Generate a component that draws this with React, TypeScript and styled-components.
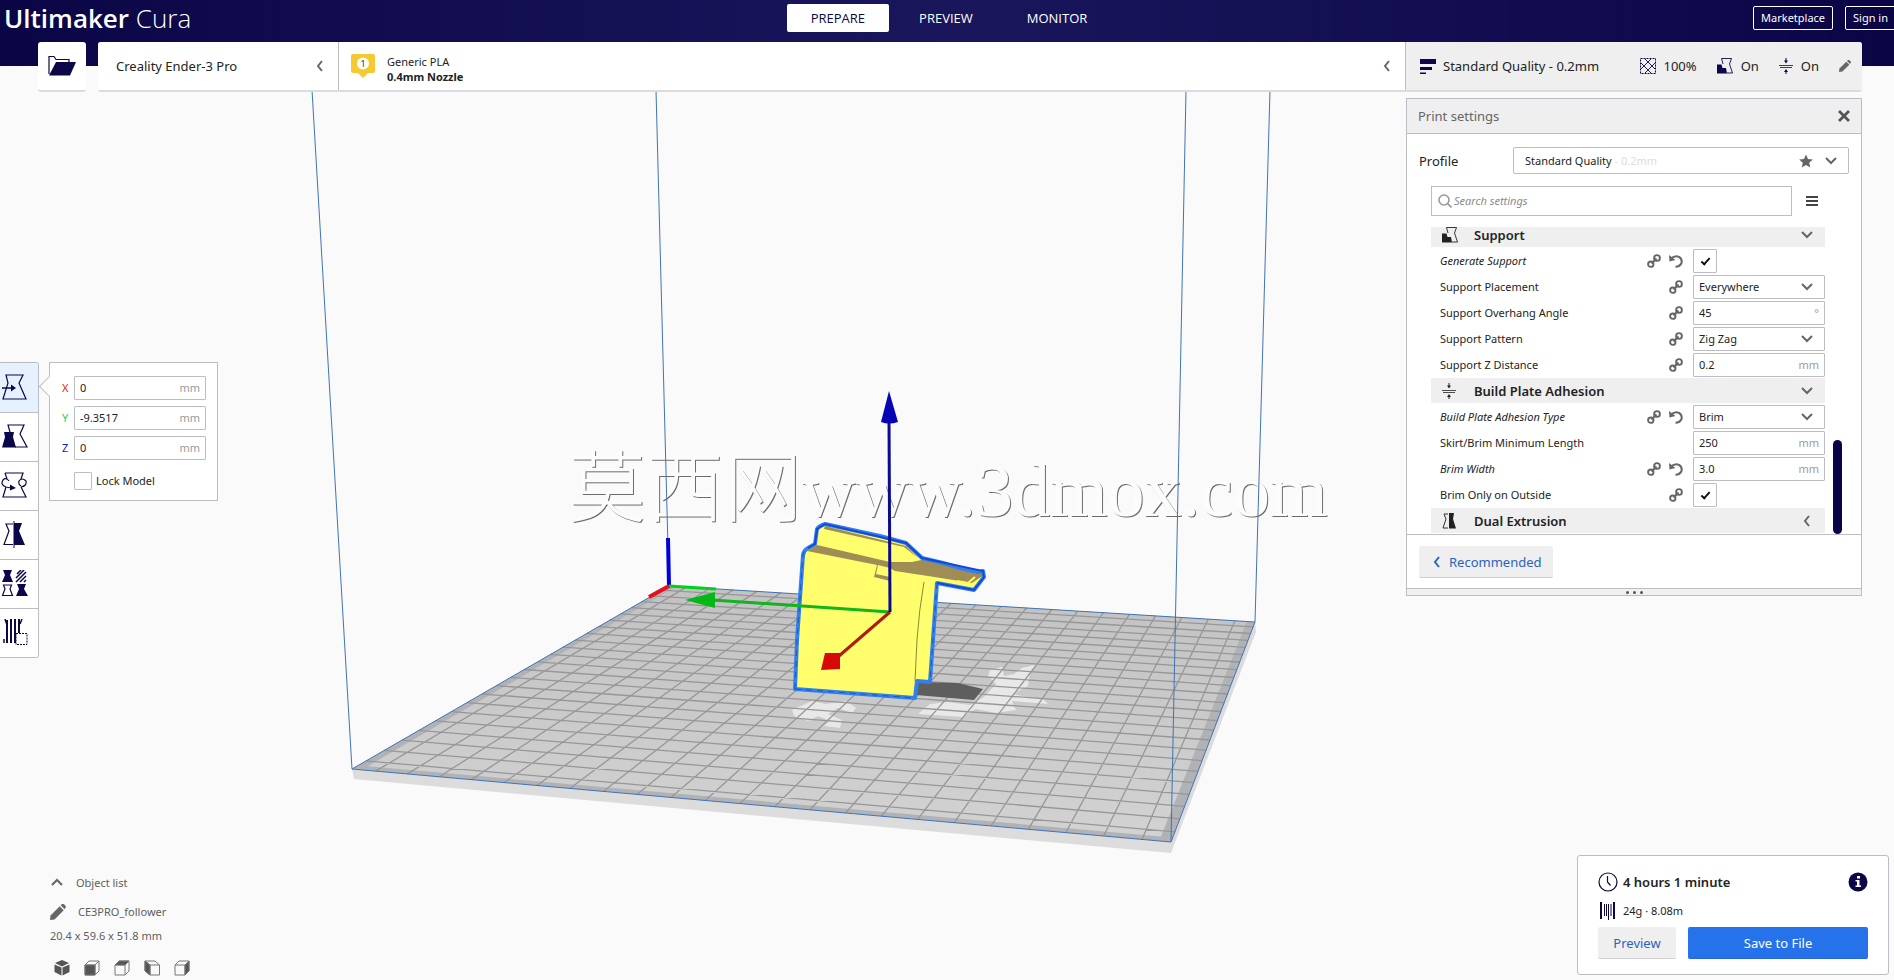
import React from "react";
import styled, { createGlobalStyle } from "styled-components";

const navy = "#0b0748";
const ink = "#232323";
const grey = "#666";
const line = "#bcbcc4";
const blue = "#2a63bd";

const GlobalStyle = createGlobalStyle`
  *, *::before, *::after { box-sizing: border-box; }
  body { margin: 0; background: #fafafa; color: ${ink}; font: 11px/16px "Noto Sans", "Noto Sans CJK SC", sans-serif; }
  button, input, select { font: inherit; color: inherit; margin: 0; }
  button { cursor: pointer; }
  svg { display: block; flex: none; }
`;

const Page = styled.div`
  position: relative;
  display: flex;
  flex-direction: column;
  min-height: 100vh;
  overflow: hidden;
`;

/* ---------- 3D scene ---------- */

const SceneSvg = styled.svg`
  position: absolute;
  inset: 0;
  width: 100%;
  height: 100%;
`;

const Watermark = styled.text`
  font-family: "Liberation Serif", "Noto Sans CJK SC", serif;
  font-size: 74px;
  font-weight: 300;
  fill: #fcfcfc;
  filter: drop-shadow(1px 1px 0 #6c6c6c);
`;

const WatermarkHan = styled.tspan`
  font-family: "Noto Sans CJK SC", sans-serif;
  font-size: 78px;
`;

type Pt = [number, number];
const bed: Pt[] = [
  [352, 769],
  [1171, 842],
  [1255, 622],
  [669, 586],
];

/* Maps a point of the unit square onto the build plate as the camera sees it. */
function project(u: number, v: number): Pt {
  const [[x0, y0], [x1, y1], [x2, y2], [x3, y3]] = bed;
  const dx1 = x1 - x2;
  const dx2 = x3 - x2;
  const sx = x0 - x1 + x2 - x3;
  const dy1 = y1 - y2;
  const dy2 = y3 - y2;
  const sy = y0 - y1 + y2 - y3;
  const det = dx1 * dy2 - dx2 * dy1;
  const g = (sx * dy2 - dx2 * sy) / det;
  const h = (dx1 * sy - sx * dy1) / det;
  const w = g * u + h * v + 1;
  return [
    ((x1 - x0 + g * x1) * u + (x3 - x0 + h * x3) * v + x0) / w,
    ((y1 - y0 + g * y1) * u + (y3 - y0 + h * y3) * v + y0) / w,
  ];
}

const seg = (a: Pt, b: Pt) =>
  `M${a[0].toFixed(1)} ${a[1].toFixed(1)}L${b[0].toFixed(1)} ${b[1].toFixed(1)}`;
const poly = (pts: Pt[]) => pts.map((p) => p.map((n) => n.toFixed(1)).join(",")).join(" ");

const gridSteps = Array.from({ length: 23 }, (_, i) => (0.75 + i) / 23.5);
const gridPath = gridSteps
  .map((t) => seg(project(t, 0), project(t, 1)) + seg(project(0, t), project(1, t)))
  .join("");
const plate = poly([
  project(0.013, 0.014),
  project(0.987, 0.014),
  project(0.987, 1),
  project(0.013, 1),
]);

const modelOutline =
  "M795 689L797 640L803 555Q804 550 808 548L815 544L817 529Q819 526 825 524L880 536L906 543L922 558L943 563L960 568L978 572L983 571L984 577L974 590L937 583L934 625L930 682L917 681L915 698Z";

function Scene() {
  return (
    <SceneSvg viewBox="0 0 1894 980" preserveAspectRatio="xMidYMid slice" aria-hidden="true">
      <defs>
        <linearGradient id="bedShade" x1="0" y1="0" x2="0" y2="1">
          <stop offset="0" stopColor="#c2c2c2" />
          <stop offset="1" stopColor="#d2d2d2" />
        </linearGradient>
      </defs>
      <Watermark x="568" y="516">
        <WatermarkHan>莫西网</WatermarkHan>www.3dmox.com
      </Watermark>
      <path d="M352 769L1171 842L1255 622L1256 632L1171 853L354 779Z" fill="#dcdcdc" />
      <polygon points={poly(bed)} fill="#b0b2b6" />
      <polygon points={plate} fill="url(#bedShade)" />
      <g fill="#e8e8e8">
        <path d="M792 710L812 701L826 704L846 701L856 708L852 713L838 708L828 714L842 720L840 728L824 726L830 721L818 716L808 721L794 716Z" />
        <path d="M918 714L930 704L948 702L970 705L984 697L996 684L988 676L990 670L1002 667L1004 676L1014 674L1022 668L1038 664L1030 672L1028 686L1012 694L1044 700L1048 704L1012 701L1016 710L996 713L976 709L962 717Z" />
      </g>
      <path d={gridPath} stroke="#979797" strokeWidth="1.300" fill="none" />
      <path d="M917 682L958 683L983 689L974 700L916 695Z" fill="#5e5e5e" />
      <path
        d="M312 90L352 769L1171 842L1186 90M1270 90L1255 622L1171 842M1255 622L669 586L656 90M669 586L352 769"
        fill="none"
        stroke="#4073b5"
      />
      <path d="M668 538L669 586" stroke="#0000dd" strokeWidth="4" />
      <path d="M669 586L716 589" stroke="#00d21c" strokeWidth="3" />
      <path d="M669 586L649 597" stroke="#e60f1e" strokeWidth="4" />
      <path d={modelOutline} fill="#ffff6e" />
      <path
        d="M807 551L817 545L890 562L912 562L926 559L950 564L983 572L984 575L972 583L966 582L928 576L895 571L890 568L878 565L876 574L890 577L890 581L874 577L877 565Z"
        fill="#a08d55"
      />
      <path d="M825 526L906 546L918 558L904 547L824 529Z" fill="#a08d55" />
      <path d="M924 582Q919 610 917 640L915 681" fill="none" stroke="#8b873a" />
      <path d="M957 581L968 583L975 577" fill="none" stroke="#ffff50" strokeWidth="2" />
      <path d={modelOutline} fill="none" stroke="#3080ee" strokeWidth="4" strokeLinejoin="round" />
      <path
        d="M795 689L797 640L803 555Q804 550 808 548L815 544M795 689L915 698M937 583L934 625L930 682"
        fill="none"
        stroke="#2257b4"
        strokeDasharray="6 5"
      />
      <path d="M808 548L815 544L817 529L825 524L906 543L922 558L983 571L984 577L974 590L937 583" fill="none" stroke="#1648d8" strokeWidth="2" />
      <path d="M890 612L712 600" stroke="#12b51c" strokeWidth="3" />
      <path d="M685 600L715 592L715 608Z" fill="#05b915" />
      <path d="M890 612L832 662" stroke="#ad1c0c" strokeWidth="3" />
      <path d="M825 653L840 653L840 669L821 670Z" fill="#d60808" />
      <path d="M889 420L890 612" stroke="#0c0c8c" strokeWidth="3" />
      <path d="M889 391L898 422Q889 425 881 422Z" fill="#0505b4" />
    </SceneSvg>
  );
}

/* ---------- Icons ---------- */

type ChevronDir = "down" | "left" | "up";
const chevronPaths: Record<ChevronDir, string> = {
  down: "M2 4L7 9L12 4",
  left: "M9 2L5 7L9 12",
  up: "M2 9L7 4L12 9",
};
const Chevron = ({ dir, color = grey }: { dir: ChevronDir; color?: string }) => (
  <svg width="14" height="14" viewBox="0 0 14 14" fill="none" stroke={color} strokeWidth="2">
    <path d={chevronPaths[dir]} />
  </svg>
);

const LinkIcon = () => (
  <svg width="14" height="14" viewBox="0 0 14 14" fill="none" stroke={grey} strokeWidth="1.900">
    <circle cx="3.800" cy="10.200" r="2.700" />
    <circle cx="10" cy="4" r="2.900" />
    <path d="M4.500 9.500L9.500 4.500" />
  </svg>
);

const RevertIcon = () => (
  <svg width="14" height="14" viewBox="0 0 14 14" fill="none" stroke={grey} strokeWidth="2">
    <path d="M2 4.500Q6 1 10 2.800Q13.500 5 12.500 9Q11 12.600 6.500 12.800" />
    <path d="M0 1L0.500 7.500L6.500 6Z" fill={grey} stroke="none" />
  </svg>
);

const SupportIcon = ({ color = navy }: { color?: string }) => (
  <svg width="16" height="16" viewBox="0 0 16 16">
    <path d="M4.500 0.500H14.500L12.500 6L15.500 15H10" fill="none" stroke={color} strokeWidth="0.900" />
    <path d="M4.500 0.500L6 6" fill="none" stroke={color} strokeWidth="0.900" />
    <path d="M0 6.500H4.500L5.500 10H9L10 15.500H0Z" fill={color} />
  </svg>
);

const AdhesionIcon = ({ color = navy }: { color?: string }) => (
  <svg width="14" height="16" viewBox="0 0 14 16" stroke={color} fill={color}>
    <path d="M0 7.500H14M1 9.500H13" fill="none" strokeWidth="0.800" />
    <path d="M7 0V3M7 13V16" fill="none" />
    <path d="M5 2.500H9L7 5.500ZM5 14H9L7 11Z" stroke="none" />
  </svg>
);

const DualIcon = () => (
  <svg width="14" height="16" viewBox="0 0 14 16">
    <path d="M6 1H2L4 6L1 15H6" fill="none" stroke="#333" />
    <path d="M7 0H12L11 6L14 15.500H7Z" fill="#222" />
  </svg>
);

const InfillIcon = () => (
  <svg width="16" height="16" viewBox="0 0 16 16" fill="none" stroke={navy}>
    <rect x="0.500" y="0.500" width="15" height="15" strokeDasharray="2 1" />
    <path d="M5 1L15 11M11 1L1 11M1 5L11 15M15 5L5 15" strokeWidth="0.900" />
  </svg>
);

const PencilIcon = ({ size = 12 }: { size?: number }) => (
  <svg width={size} height={size} viewBox="0 0 14 14" fill={grey}>
    <path d="M0 14L0.500 10L8.500 2L12 5.500L4 13.500Z" />
    <path d="M9.300 1.200L10.500 0Q11.500 -0.500 12.500 0.500L13.500 1.500Q14.300 2.500 13.500 3.500L12.800 4.700Z" />
  </svg>
);

const FolderIcon = () => (
  <svg width="28" height="22" viewBox="0 0 28 22">
    <path d="M1 19V1.500H6L8 4.500H21V8" fill="none" stroke={navy} strokeWidth="1.200" />
    <path d="M8 7H28L22 20.500H1Z" fill={navy} />
  </svg>
);

const QualityIcon = () => (
  <svg width="16" height="16" viewBox="0 0 16 16" fill={navy}>
    <path d="M0 1H16V6H0ZM0 9H12V12H0ZM0 14.500H6V16H0Z" />
  </svg>
);

const glassOutline = "M5 1H22L18 9L25 25H2L7 9Z";

const toolGlyphs: Record<string, React.ReactNode> = {
  Move: (
    <>
      <path d={glassOutline} />
      <path d="M1 14H12" strokeWidth="1.600" />
      <path d="M10 10.500L15 14L10 17.500Z" fill={navy} stroke="none" />
    </>
  ),
  Scale: (
    <>
      <path d="M8 11L9 9L7 2H23L19 11L26 24H14" />
      <path d="M3 9H13L12 14L15 24.500H1L4 14Z" fill={navy} stroke="none" />
    </>
  ),
  Rotate: (
    <>
      <path d="M4 1H22L20 7M20 15L25 25H2L5 15M4 1L6 7" />
      <path d="M8 9Q5 5 2 8Q-1 13 5 15L10 16M20 15Q26 14 25 9Q21 5 18 9Q17 12 20 14" />
      <path d="M9 12.500L15 16L9 18.500Z" fill={navy} stroke="none" />
    </>
  ),
  Mirror: (
    <>
      <path d="M12 3H5L8 10L3 23.500H12" />
      <path d="M13 0V27" strokeWidth="1" />
      <path d="M13 2H21L18 10L24 24H13Z" fill={navy} stroke="none" />
    </>
  ),
  "Per model settings": (
    <>
      <path d="M2 0H11L9 5L12 12H1L4 5Z" fill={navy} stroke="none" />
      <path d="M16 4L20 0M15 8L23 0M15 12L25 2M19 12L25 6M23 12L25 10" strokeWidth="1.500" />
      <path d="M2.500 15H10.500L9 19L11.500 25.500H1.500L4 19Z" />
      <path d="M16 14H25L23 19L27 26H15L18 19Z" fill={navy} stroke="none" />
    </>
  ),
  "Support blocker": (
    <>
      <path d="M6 1V24M10 0V24M14 0V24M18 0V14" strokeWidth="2" />
      <path d="M4 0L6 6M21 0L19 5M3 20V24" strokeWidth="1.500" />
      <rect x="15" y="14.500" width="11" height="11" strokeDasharray="2 1" strokeWidth="1" />
    </>
  ),
};

const ToolIcon = ({ name }: { name: string }) => (
  <svg width="28" height="28" viewBox="0 0 28 28" fill="none" stroke={navy} strokeWidth="1.200">
    {toolGlyphs[name]}
  </svg>
);

/* Each view cube shades the face that it turns towards the camera. */
const cubeFaces: Record<string, string> = {
  Front: "M1 5H11V15H1Z",
  Top: "M1 5L5 1H15L11 5Z",
  Left: "M1 1L6 5V15L1 11Z",
  Right: "M11 5L15 1V11L11 15Z",
};
const CubeIcon = ({ view }: { view: string }) => (
  <svg width="16" height="16" viewBox="0 0 16 16" fill="none" stroke="#777">
    {view === "3D" ? (
      <g fill="#555" stroke="none">
        <path d="M8 0L15 3L8 6.500L1 3ZM0.500 4.500L7.500 7.500V15.500L0.500 12ZM15.500 4.500L8.500 7.500V15.500L15.500 12Z" />
      </g>
    ) : view === "Left" ? (
      <>
        <path d="M1 1H11L15.500 5V15H6V5L1 1V11L6 15M6 5H15.500" />
        <path d={cubeFaces.Left} fill="#555" />
      </>
    ) : (
      <>
        <path d="M1 5H11V15H1ZM1 5L5 1H15L11 5M15 1V11L11 15" />
        <path d={cubeFaces[view]} fill="#555" />
      </>
    )}
  </svg>
);

/* ---------- Header ---------- */

const Header = styled.header`
  position: relative;
  display: grid;
  grid-template-columns: 1fr auto 1fr;
  align-items: start;
  height: 66px;
  padding: 0 0 0 4px;
  background: linear-gradient(90deg, #0a0646, #1a165c 50%, #0a0646);
  color: #fff;
`;

const Logo = styled.h1`
  margin: 0;
  font-family: "Open Sans", "Noto Sans", sans-serif;
  font-size: 26px;
  line-height: 36px;
  font-weight: 600;
`;

const LogoLight = styled.span`
  font-weight: 300;
`;

const Tabs = styled.nav`
  display: flex;
  gap: 6px;
  padding-top: 4px;
`;

const Tab = styled.button<{ $active?: boolean }>`
  height: 28px;
  padding: 0 24px;
  border: 0;
  border-radius: 2px;
  background: ${(p) => (p.$active ? "#fff" : "transparent")};
  color: ${(p) => (p.$active ? navy : "#fff")};
  font-family: "Open Sans", "Noto Sans", sans-serif;
  font-size: 13px;
`;

const Account = styled.div`
  display: flex;
  justify-content: flex-end;
  gap: 12px;
  padding-top: 6px;
  margin-right: -2px;
`;

const OutlineButton = styled.button`
  height: 24px;
  padding: 0 7px;
  border: 1px solid #fff;
  border-radius: 2px;
  background: transparent;
  white-space: nowrap;
`;

/* ---------- Stage bar ---------- */

const StageBar = styled.div`
  position: relative;
  display: flex;
  gap: 12px;
  margin: -24px 32px 0 38px;
`;

const StageCard = styled.div`
  display: flex;
  flex: 1;
  height: 50px;
  border-bottom: 2px solid #dcdcdc;
  border-radius: 3px;
  background: #fff;
  overflow: hidden;
`;

const FolderButton = styled.button`
  display: flex;
  align-items: center;
  justify-content: center;
  width: 48px;
  height: 50px;
  border: 0;
  border-bottom: 2px solid #dcdcdc;
  border-radius: 3px;
  background: #fff;
`;

const StageItem = styled.button<{ $width?: number; $shaded?: boolean }>`
  display: flex;
  align-items: center;
  flex: ${(p) => (p.$width ? `0 0 ${p.$width}px` : "1")};
  padding: 0 11px 0 ${(p) => (p.$shaded ? 14 : 12)}px;
  border: 0;
  border-right: ${(p) => (p.$shaded ? "0" : `1px solid ${line}`)};
  background: ${(p) => (p.$shaded ? "#efefef" : "#fff")};
  font-size: 13px;
  text-align: left;
`;

const Grow = styled.span`
  flex: 1;
`;

const MachineName = styled(Grow)`
  padding-left: 6px;
`;

const MaterialText = styled(Grow)`
  display: flex;
  flex-direction: column;
  padding: 5px 0 0 12px;
  font-size: 11px;
  line-height: 15px;
`;

const SetupValue = styled.span`
  display: flex;
  align-items: center;
  gap: 8px;
  margin-right: 20px;
`;

const SetupName = styled(Grow)`
  padding-left: 7px;
`;

/* ---------- Workspace ---------- */

const Workspace = styled.main`
  position: relative;
  display: flex;
  flex: 1;
  justify-content: space-between;
`;

const Side = styled.div`
  display: flex;
  flex-direction: column;
  justify-content: space-between;
`;

const Tools = styled.div`
  display: flex;
  align-items: flex-start;
  gap: 10px;
  padding-top: 270px;
`;

const ToolRail = styled.div`
  border: 1px solid ${line};
  border-left: 0;
  border-radius: 0 3px 3px 0;
  background: #fff;
  overflow: hidden;
`;

const ToolButton = styled.button<{ $active?: boolean }>`
  display: flex;
  align-items: center;
  width: 38px;
  height: 49px;
  padding: 0 0 0 1px;
  border: 0;
  background: ${(p) => (p.$active ? "#e6f1ff" : "#fff")};
  & + & {
    border-top: 1px solid ${line};
  }
`;

const MovePanel = styled.section`
  position: relative;
  width: 169px;
  padding: 13px 11px 10px 12px;
  border: 1px solid ${line};
  background: #fff;
  &::before {
    content: "";
    position: absolute;
    top: 16px;
    left: -8px;
    width: 15px;
    height: 15px;
    border: 1px solid ${line};
    border-width: 0 0 1px 1px;
    background: #fff;
    transform: rotate(45deg);
  }
`;

const AxisRow = styled.label<{ $color: string }>`
  display: grid;
  grid-template-columns: 12px 1fr;
  align-items: center;
  margin-bottom: 6px;
  color: ${(p) => p.$color};
`;

const FieldBox = styled.span`
  display: flex;
  align-items: center;
  height: 24px;
  border: 1px solid ${line};
  border-radius: 1px;
  background: #fff;
  color: ${ink};
`;

const FieldInput = styled.input`
  flex: 1;
  width: 0;
  min-width: 0;
  padding: 0 0 0 5px;
  border: 0;
  background: transparent;
  outline: 0;
`;

const Unit = styled.span`
  padding-right: 5px;
  color: #9a9a9a;
`;

const LockLabel = styled.label`
  display: flex;
  align-items: center;
  gap: 4px;
  margin: 12px 0 0 12px;
`;

const TickBox = styled.input<{ $size: number }>`
  appearance: none;
  display: grid;
  place-items: center;
  width: ${(p) => p.$size}px;
  height: ${(p) => p.$size}px;
  border: 1px solid ${line};
  border-radius: 1px;
  background: #fff;
  &:checked::before {
    content: "";
    width: 9px;
    height: 5px;
    border: solid #111;
    border-width: 0 0 2px 2px;
    transform: translateY(-1px) rotate(-48deg);
  }
`;

const ObjectInfo = styled.div`
  display: flex;
  flex-direction: column;
  padding: 0 0 4px 50px;
  color: #5e5e5e;
`;

const ObjectRow = styled.button`
  display: flex;
  align-items: center;
  gap: 12px;
  height: 29px;
  padding: 0;
  border: 0;
  background: transparent;
`;

const ObjectSize = styled.p`
  margin: 2px 0 16px;
`;

const Views = styled.div`
  display: flex;
  gap: 14px;
  padding-left: 4px;
`;

const ViewButton = styled.button`
  padding: 0;
  border: 0;
  background: transparent;
`;

/* ---------- Print settings ---------- */

const RightSide = styled(Side)`
  align-items: flex-end;
  padding: 6px 0 5px;
`;

const Settings = styled.section`
  width: 456px;
  margin-right: 32px;
  border: 1px solid ${line};
  background: #fff;
`;

const SettingsHead = styled.div`
  display: flex;
  align-items: center;
  justify-content: space-between;
  height: 35px;
  padding: 0 10px 0 11px;
  border-bottom: 1px solid ${line};
  background: #efefef;
  color: ${grey};
  font-size: 13px;
`;

const PlainButton = styled.button`
  display: flex;
  padding: 0;
  border: 0;
  background: transparent;
`;

const ProfileRow = styled.div`
  display: flex;
  align-items: center;
  justify-content: space-between;
  padding: 13px 12px 0;
  font-size: 13px;
`;

const ProfileButton = styled.button`
  display: flex;
  align-items: center;
  gap: 11px;
  width: 336px;
  height: 27px;
  padding: 0 10px 0 11px;
  border: 1px solid ${line};
  border-radius: 2px;
  background: #fff;
  font-size: 11px;
  text-align: left;
`;

const Faint = styled.span`
  color: #dcdcdc;
`;

const SearchRow = styled.div`
  display: flex;
  align-items: center;
  gap: 14px;
  padding: 12px 0 11px 24px;
`;

const SearchBox = styled.label`
  display: flex;
  align-items: center;
  width: 361px;
  height: 30px;
  padding-left: 6px;
  border: 1px solid ${line};
`;

const SearchInput = styled.input`
  flex: 1;
  padding: 0 0 0 2px;
  border: 0;
  outline: 0;
  &::placeholder {
    color: #8c8c8c;
    font-style: italic;
    opacity: 1;
  }
`;

const ListArea = styled.div`
  display: flex;
  align-items: flex-end;
  gap: 8px;
  height: 308px;
  padding-left: 24px;
  border-bottom: 1px solid ${line};
  overflow: hidden;
`;

const List = styled.div`
  width: 394px;
  padding-bottom: 1px;
`;

const ScrollThumb = styled.div`
  width: 9px;
  height: 94px;
  border-radius: 5px;
  background: #08044a;
`;

const Category = styled.button`
  display: grid;
  grid-template-columns: 43px 1fr 25px;
  align-items: center;
  width: 100%;
  height: 25px;
  margin-bottom: 1px;
  padding: 1px 0 0;
  border: 0;
  background: #efefef;
  font-size: 13px;
  line-height: 14px;
  font-weight: 600;
  text-align: left;
  & > svg:first-child {
    margin-left: 11px;
  }
  &:last-child {
    margin-bottom: 0;
  }
`;

const SettingRow = styled.div`
  display: flex;
  align-items: center;
  gap: 8px;
  height: 26px;
  padding-left: 9px;
`;

const SettingLabel = styled.label<{ $changed?: boolean }>`
  flex: 1;
  font-style: ${(p) => (p.$changed ? "italic" : "normal")};
`;

const Control = styled.div`
  width: 132px;
  margin-left: 2px;
`;

const SelectBox = styled(FieldBox)`
  position: relative;
  & > svg {
    position: absolute;
    right: 10px;
    pointer-events: none;
  }
`;

const Select = styled.select`
  appearance: none;
  width: 100%;
  height: 22px;
  padding: 0 5px;
  border: 0;
  background: transparent;
`;

const SettingsFoot = styled.div`
  padding: 11px 12px 10px;
`;

const SoftButton = styled.button`
  display: flex;
  align-items: center;
  justify-content: center;
  gap: 5px;
  height: 32px;
  padding: 0 11px;
  border: 0;
  border-bottom: 1px solid #d0d0d0;
  border-radius: 2px;
  background: #efefef;
  color: ${blue};
  font-size: 13px;
`;

const DragHandle = styled.div`
  display: flex;
  align-items: center;
  justify-content: center;
  gap: 4px;
  height: 7px;
  border-top: 1px solid ${line};
  background: #f0f0f0;
`;

const Dot = styled.i`
  width: 3px;
  height: 3px;
  border-radius: 50%;
  background: #555;
`;

/* ---------- Output card ---------- */

const Output = styled.section`
  width: 312px;
  margin-right: 5px;
  padding: 16px 20px 15px;
  border: 1px solid ${line};
  border-radius: 3px;
  background: #fff;
`;

const OutputRow = styled.div`
  display: flex;
  align-items: center;
  gap: 5px;
  & + & {
    margin: 10px 0 7px;
  }
`;

const Duration = styled.strong`
  flex: 1;
  font-size: 13px;
  font-weight: 600;
`;

const Actions = styled.div`
  display: grid;
  grid-template-columns: 78px 1fr;
  gap: 12px;
`;

const SaveButton = styled(SoftButton)`
  border-bottom-color: #2468d8;
  background: #2672ea;
  color: #fff;
`;

type Setting = {
  label: string;
  kind: "tick" | "select" | "value";
  value?: string;
  unit?: string;
  linked?: boolean;
  changed?: boolean;
};

const supportSettings: Setting[] = [
  { label: "Generate Support", kind: "tick", linked: true, changed: true },
  { label: "Support Placement", kind: "select", value: "Everywhere", linked: true },
  { label: "Support Overhang Angle", kind: "value", value: "45", unit: "°", linked: true },
  { label: "Support Pattern", kind: "select", value: "Zig Zag", linked: true },
  { label: "Support Z Distance", kind: "value", value: "0.2", unit: "mm", linked: true },
];

const adhesionSettings: Setting[] = [
  { label: "Build Plate Adhesion Type", kind: "select", value: "Brim", linked: true, changed: true },
  { label: "Skirt/Brim Minimum Length", kind: "value", value: "250", unit: "mm" },
  { label: "Brim Width", kind: "value", value: "3.0", unit: "mm", linked: true, changed: true },
  { label: "Brim Only on Outside", kind: "tick", linked: true },
];

function SettingItem({ label, kind, value, unit, linked, changed }: Setting) {
  const id = label.toLowerCase().replace(/\W+/g, "-");
  return (
    <SettingRow>
      <SettingLabel htmlFor={id} $changed={changed}>
        {label}
      </SettingLabel>
      {linked && <LinkIcon />}
      {changed && (
        <PlainButton aria-label={`Reset ${label}`}>
          <RevertIcon />
        </PlainButton>
      )}
      <Control>
        {kind === "tick" && <TickBox id={id} type="checkbox" $size={24} defaultChecked />}
        {kind === "select" && (
          <SelectBox>
            <Select id={id} defaultValue={value}>
              <option>{value}</option>
            </Select>
            <Chevron dir="down" />
          </SelectBox>
        )}
        {kind === "value" && (
          <FieldBox>
            <FieldInput id={id} defaultValue={value} />
            <Unit>{unit}</Unit>
          </FieldBox>
        )}
      </Control>
    </SettingRow>
  );
}

const axes = [
  { name: "X", value: "0", color: "#e02020" },
  { name: "Y", value: "-9.3517", color: "#1fd04a" },
  { name: "Z", value: "0", color: "#1c1cc0" },
];

export default function App() {
  return (
    <Page>
      <GlobalStyle />
      <Scene />
      <Header>
        <Logo>
          Ultimaker <LogoLight>Cura</LogoLight>
        </Logo>
        <Tabs>
          <Tab $active>PREPARE</Tab>
          <Tab>PREVIEW</Tab>
          <Tab>MONITOR</Tab>
        </Tabs>
        <Account>
          <OutlineButton>Marketplace</OutlineButton>
          <OutlineButton>Sign in</OutlineButton>
        </Account>
      </Header>

      <StageBar>
        <FolderButton aria-label="Open file">
          <FolderIcon />
        </FolderButton>
        <StageCard>
          <StageItem $width={241}>
            <MachineName>Creality Ender-3 Pro</MachineName>
            <Chevron dir="left" />
          </StageItem>
          <StageItem>
            <svg width="24" height="24" viewBox="0 0 24 24">
              <path d="M2 0H22Q24 0 24 2V17Q24 19 22 19H17L12 24L7 19H2Q0 19 0 17V2Q0 0 2 0Z" fill="#f5c92f" />
              <circle cx="12" cy="9.500" r="6" fill="#fff" />
              <text x="12" y="13" textAnchor="middle" fontSize="9" fill="#333">
                1
              </text>
            </svg>
            <MaterialText>
              <span>Generic PLA</span>
              <strong>0.4mm Nozzle</strong>
            </MaterialText>
            <Chevron dir="left" />
          </StageItem>
          <StageItem $width={456} $shaded>
            <QualityIcon />
            <SetupName>Standard Quality - 0.2mm</SetupName>
            <SetupValue>
              <InfillIcon />
              100%
            </SetupValue>
            <SetupValue>
              <SupportIcon />
              On
            </SetupValue>
            <SetupValue>
              <AdhesionIcon />
              On
            </SetupValue>
            <PencilIcon />
          </StageItem>
        </StageCard>
      </StageBar>

      <Workspace>
        <Side>
          <Tools>
            <ToolRail>
              {Object.keys(toolGlyphs).map((name) => (
                <ToolButton key={name} $active={name === "Move"} aria-label={name}>
                  <ToolIcon name={name} />
                </ToolButton>
              ))}
            </ToolRail>
            <MovePanel>
              {axes.map((axis) => (
                <AxisRow key={axis.name} $color={axis.color}>
                  {axis.name}
                  <FieldBox>
                    <FieldInput defaultValue={axis.value} />
                    <Unit>mm</Unit>
                  </FieldBox>
                </AxisRow>
              ))}
              <LockLabel>
                <TickBox type="checkbox" $size={18} />
                Lock Model
              </LockLabel>
            </MovePanel>
          </Tools>
          <ObjectInfo>
            <ObjectRow>
              <Chevron dir="up" />
              Object list
            </ObjectRow>
            <ObjectRow>
              <PencilIcon size={16} />
              CE3PRO_follower
            </ObjectRow>
            <ObjectSize>20.4 x 59.6 x 51.8 mm</ObjectSize>
            <Views>
              {["3D", "Front", "Top", "Left", "Right"].map((view) => (
                <ViewButton key={view} aria-label={`${view} view`}>
                  <CubeIcon view={view} />
                </ViewButton>
              ))}
            </Views>
          </ObjectInfo>
        </Side>

        <RightSide>
          <Settings>
            <SettingsHead>
              Print settings
              <PlainButton aria-label="Close">
                <svg width="14" height="14" viewBox="0 0 14 14" stroke="#555" strokeWidth="2.800">
                  <path d="M2 2L12 12M12 2L2 12" />
                </svg>
              </PlainButton>
            </SettingsHead>
            <ProfileRow>
              Profile
              <ProfileButton>
                <Grow>
                  Standard Quality <Faint>- 0.2mm</Faint>
                </Grow>
                <svg width="14" height="14" viewBox="0 0 14 14" fill={grey}>
                  <path d="M7 0.500L9 5L13.800 5.500L10.200 8.700L11.300 13.500L7 11L2.700 13.500L3.800 8.700L0.200 5.500L5 5Z" />
                </svg>
                <Chevron dir="down" />
              </ProfileButton>
            </ProfileRow>
            <SearchRow>
              <SearchBox>
                <svg width="14" height="14" viewBox="0 0 14 14" fill="none" stroke="#999" strokeWidth="1.600">
                  <circle cx="6" cy="6" r="5" />
                  <path d="M9.500 9.500L13.500 13.500" />
                </svg>
                <SearchInput placeholder="Search settings" aria-label="Search settings" />
              </SearchBox>
              <PlainButton aria-label="Setting visibility">
                <svg width="12" height="12" viewBox="0 0 12 12" stroke="#444" strokeWidth="2">
                  <path d="M0 2H12M0 6H12M0 10H12" />
                </svg>
              </PlainButton>
            </SearchRow>
            <ListArea>
              <List>
                <Category>
                  <SupportIcon color="#222" />
                  Support
                  <Chevron dir="down" />
                </Category>
                {supportSettings.map((s) => (
                  <SettingItem key={s.label} {...s} />
                ))}
                <Category>
                  <AdhesionIcon color="#222" />
                  Build Plate Adhesion
                  <Chevron dir="down" />
                </Category>
                {adhesionSettings.map((s) => (
                  <SettingItem key={s.label} {...s} />
                ))}
                <Category>
                  <DualIcon />
                  Dual Extrusion
                  <Chevron dir="left" />
                </Category>
              </List>
              <ScrollThumb />
            </ListArea>
            <SettingsFoot>
              <SoftButton>
                <Chevron dir="left" color={blue} />
                Recommended
              </SoftButton>
            </SettingsFoot>
            <DragHandle>
              <Dot />
              <Dot />
              <Dot />
            </DragHandle>
          </Settings>

          <Output>
            <OutputRow>
              <svg width="20" height="20" viewBox="0 0 20 20" fill="none" stroke={navy} strokeWidth="1.200">
                <circle cx="10" cy="10" r="9" />
                <path d="M9.500 4V10L12.500 13.500" />
              </svg>
              <Duration>4 hours 1 minute</Duration>
              <PlainButton aria-label="Print details">
                <svg width="20" height="20" viewBox="0 0 20 20">
                  <circle cx="10" cy="10" r="9.500" fill={navy} />
                  <path d="M9 4H12V6.500H9ZM7.500 8H11.500V13.500H13V15H7.500V13.500H9V9.500H7.500Z" fill="#fff" />
                </svg>
              </PlainButton>
            </OutputRow>
            <OutputRow>
              <svg width="20" height="18" viewBox="0 0 20 18" stroke={navy}>
                <path d="M3 0V17M16 0V17" strokeWidth="2" />
                <path d="M6.500 2V14M8.500 2V14M10.500 2V18M13 2V14" strokeWidth="1" />
              </svg>
              24g · 8.08m
            </OutputRow>
            <Actions>
              <SoftButton>Preview</SoftButton>
              <SaveButton>Save to File</SaveButton>
            </Actions>
          </Output>
        </RightSide>
      </Workspace>
    </Page>
  );
}
